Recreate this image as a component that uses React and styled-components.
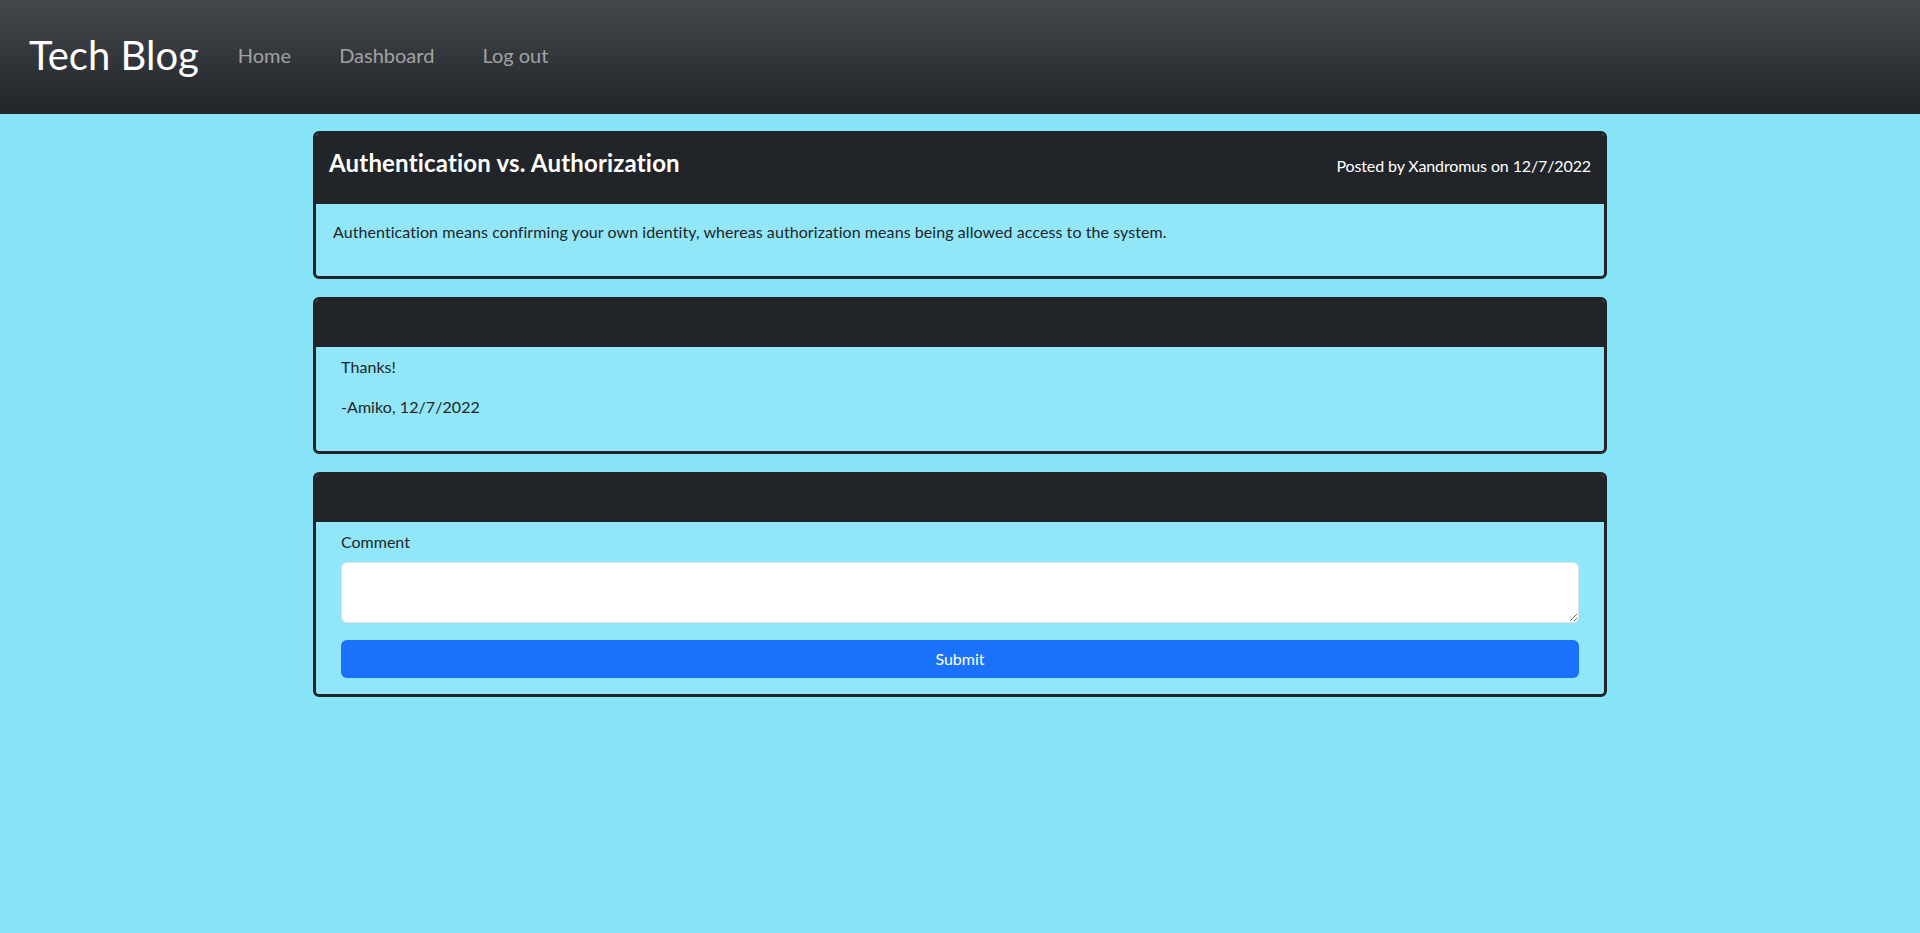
import React from "react";
import styled, { createGlobalStyle } from "styled-components";

const GlobalStyle = createGlobalStyle`
  html, body {
    margin: 0;
    padding: 0;
  }
  body {
    background: #87e4f7;
    color: #212529;
    font-family: Lato, "Open Sans", "Liberation Sans", sans-serif;
    font-size: 16px;
    line-height: 1.5;
    min-height: 100vh;
  }
  * { box-sizing: border-box; }
`;

const Navbar = styled.nav`
  height: 114px;
  display: flex;
  align-items: center;
  padding-left: 29px;
  background: linear-gradient(180deg, #44484c 0%, #212529 100%);
`;

const Brand = styled.a`
  font-size: 40px;
  line-height: 48px;
  font-weight: 400;
  color: #fff;
  text-decoration: none;
  margin-right: 39px;
  margin-top: -4px;
`;

const NavLinks = styled.div`
  display: flex;
  gap: 48px;
  margin-top: -5px;
`;

const NavLink = styled.a`
  font-size: 20px;
  line-height: 30px;
  color: rgba(255, 255, 255, 0.55);
  text-decoration: none;
`;

const Main = styled.main`
  width: 1294px;
  margin: 0 auto;
  padding-top: 17px;
  display: flex;
  flex-direction: column;
  gap: 18px;
`;

const Card = styled.section`
  border: 3px solid #212529;
  border-radius: 6px;
  background: #91e6f7;
  overflow: hidden;
`;

const CardHeader = styled.header`
  background: #212529;
  color: #fff;
  height: ${(p) => (p.$tall ? "70px" : "47px")};
  padding: 15px 13px 0;
  display: flex;
  justify-content: space-between;
  align-items: baseline;
`;

const Title = styled.h2`
  margin: 0;
  font-size: 24px;
  line-height: 1.2;
  font-weight: 700;
  letter-spacing: 0.18px;
`;

const Meta = styled.span`
  font-size: 16px;
  line-height: 24px;
  letter-spacing: -0.12px;
`;

const CardBody = styled.div`
  padding: ${(p) => p.$pad};
`;

const Para = styled.p`
  margin: 0 0 16px;
  letter-spacing: 0.07px;
`;

const Label = styled.label`
  display: block;
  margin-bottom: 8px;
`;

const TextArea = styled.textarea`
  display: block;
  width: 100%;
  height: 61px;
  padding: 6px 12px;
  font: inherit;
  color: #212529;
  background: #fff;
  border: 1px solid #dee2e6;
  border-radius: 6px;
  margin-bottom: 17px;
  resize: vertical;
  outline: none;
`;

const SubmitButton = styled.button`
  display: block;
  width: 100%;
  height: 38px;
  font: inherit;
  color: #fff;
  background: #1a71fc;
  border: none;
  border-radius: 6px;
  cursor: pointer;
`;

export default function App() {
  return (
    <>
      <GlobalStyle />
      <Navbar>
        <Brand href="#">Tech Blog</Brand>
        <NavLinks>
          <NavLink href="#">Home</NavLink>
          <NavLink href="#">Dashboard</NavLink>
          <NavLink href="#">Log out</NavLink>
        </NavLinks>
      </Navbar>
      <Main>
        <Card>
          <CardHeader $tall>
            <Title>Authentication vs. Authorization</Title>
            <Meta>Posted by Xandromus on 12/7/2022</Meta>
          </CardHeader>
          <CardBody $pad="16px 17px 16px">
            <Para>
              Authentication means confirming your own identity, whereas authorization means being allowed access to the system.
            </Para>
          </CardBody>
        </Card>
        <Card>
          <CardHeader />
          <CardBody $pad="8px 25px 16px">
            <Para>Thanks!</Para>
            <Para>-Amiko, 12/7/2022</Para>
          </CardBody>
        </Card>
        <Card>
          <CardHeader />
          <CardBody $pad="8px 25px 16px">
            <Label htmlFor="comment">Comment</Label>
            <TextArea id="comment" />
            <SubmitButton type="button">Submit</SubmitButton>
          </CardBody>
        </Card>
      </Main>
    </>
  );
}
